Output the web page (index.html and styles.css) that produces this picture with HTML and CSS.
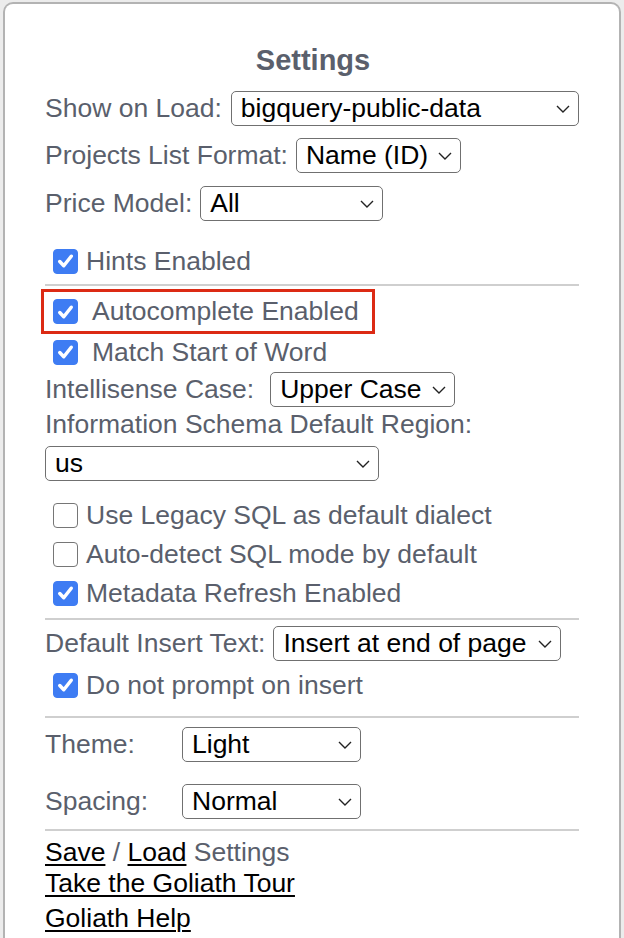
FILE: index.html
```html
<!DOCTYPE html>
<html>
<head>
<meta charset="utf-8">
<link rel="stylesheet" href="styles.css">
</head>
<body>
<div class="popup">
  <h1 class="title">Settings</h1>

  <div class="row r1">
    <span class="label">Show on Load:</span>
    <div class="select w-load"><span>bigquery-public-data</span><svg class="chev" viewBox="0 0 14 8"><path d="M1 1 L7 7 L13 1"/></svg></div>
  </div>
  <div class="row r2">
    <span class="label">Projects List Format:</span>
    <div class="select w-fmt"><span>Name (ID)</span><svg class="chev" viewBox="0 0 14 8"><path d="M1 1 L7 7 L13 1"/></svg></div>
  </div>
  <div class="row r3">
    <span class="label">Price Model:</span>
    <div class="select w-price"><span>All</span><svg class="chev" viewBox="0 0 14 8"><path d="M1 1 L7 7 L13 1"/></svg></div>
  </div>

  <div class="check hints">
    <span class="cb on"><svg viewBox="0 0 24 24"><path d="M6 12.5 L10.2 17 L18 7"/></svg></span>
    <span class="label">Hints Enabled</span>
  </div>
  <div class="rule rule1"></div>

  <div class="highlight">
    <div class="check wide">
      <span class="cb on"><svg viewBox="0 0 24 24"><path d="M6 12.5 L10.2 17 L18 7"/></svg></span>
      <span class="label">Autocomplete Enabled</span>
    </div>
  </div>
  <div class="check wide match">
    <span class="cb on"><svg viewBox="0 0 24 24"><path d="M6 12.5 L10.2 17 L18 7"/></svg></span>
    <span class="label">Match Start of Word</span>
  </div>

  <div class="row r-case">
    <span class="label">Intellisense Case:</span>
    <div class="select w-case"><span>Upper Case</span><svg class="chev" viewBox="0 0 14 8"><path d="M1 1 L7 7 L13 1"/></svg></div>
  </div>
  <div class="text-line info">
    <span class="label">Information Schema Default Region:</span>
  </div>
  <div class="row r-us">
    <div class="select w-us"><span>us</span><svg class="chev" viewBox="0 0 14 8"><path d="M1 1 L7 7 L13 1"/></svg></div>
  </div>

  <div class="check legacy">
    <span class="cb"></span>
    <span class="label">Use Legacy SQL as default dialect</span>
  </div>
  <div class="check next">
    <span class="cb"></span>
    <span class="label">Auto-detect SQL mode by default</span>
  </div>
  <div class="check next">
    <span class="cb on"><svg viewBox="0 0 24 24"><path d="M6 12.5 L10.2 17 L18 7"/></svg></span>
    <span class="label">Metadata Refresh Enabled</span>
  </div>
  <div class="rule rule2"></div>

  <div class="row r-insert">
    <span class="label">Default Insert Text:</span>
    <div class="select w-insert"><span>Insert at end of page</span><svg class="chev" viewBox="0 0 14 8"><path d="M1 1 L7 7 L13 1"/></svg></div>
  </div>
  <div class="check prompt">
    <span class="cb on"><svg viewBox="0 0 24 24"><path d="M6 12.5 L10.2 17 L18 7"/></svg></span>
    <span class="label">Do not prompt on insert</span>
  </div>
  <div class="rule rule3"></div>

  <div class="pair theme">
    <span class="label">Theme:</span>
    <div class="select w-theme"><span>Light</span><svg class="chev" viewBox="0 0 14 8"><path d="M1 1 L7 7 L13 1"/></svg></div>
  </div>
  <div class="pair spacing">
    <span class="label">Spacing:</span>
    <div class="select w-theme"><span>Normal</span><svg class="chev" viewBox="0 0 14 8"><path d="M1 1 L7 7 L13 1"/></svg></div>
  </div>
  <div class="rule rule4"></div>

  <div class="text-line links first"><a href="#">Save</a><span class="label"> / </span><a href="#">Load</a><span class="label"> Settings</span></div>
  <div class="text-line links tour"><a href="#">Take the Goliath Tour</a></div>
  <div class="text-line links help"><a href="#">Goliath Help</a></div>
</div>
</body>
</html>
```

FILE: styles.css
```css
html, body {
  margin: 0;
  padding: 0;
}
body {
  background: #ececec;
  font-family: "Liberation Sans", Arial, sans-serif;
  font-size: 26.5px;
  height: 938px;
  overflow: hidden;
}
.popup {
  margin: 2px 3px 0 3px;
  height: 960px;
  box-sizing: border-box;
  background: #fff;
  border: 2px solid #b3b3b3;
  border-bottom: none;
  border-radius: 10px 10px 0 0;
  padding: 0 38px 0 40px;
  display: flex;
  flex-direction: column;
  align-items: flex-start;
}
.label {
  color: #5a5f6c;
  white-space: nowrap;
}
.title {
  align-self: stretch;
  text-align: center;
  margin: 39px 0 0 0;
  font-size: 29px;
  line-height: 34px;
  font-weight: bold;
  color: #5a5f6c;
}
.row {
  display: flex;
  align-items: center;
  height: 35px;
}
.select {
  box-sizing: border-box;
  height: 35px;
  border: 1.5px solid #707070;
  border-radius: 5px;
  display: flex;
  align-items: center;
  justify-content: space-between;
  padding: 0 8px 0 9px;
  color: #000;
  white-space: nowrap;
  background: #fff;
}
.chev {
  width: 14px;
  height: 8px;
  flex: none;
  margin-left: 8px;
}
.chev path {
  fill: none;
  stroke: #222;
  stroke-width: 1.4;
}
.r1 { margin-top: 14px; }
.r1 .select { margin-left: 9px; }
.w-load { width: 348px; }
.r2 { margin-top: 12px; }
.r2 .select { margin-left: 8px; }
.w-fmt { width: 165px; }
.r3 { margin-top: 13px; }
.r3 .select { margin-left: 8px; }
.w-price { width: 183px; }

.check {
  display: flex;
  align-items: center;
  height: 28px;
  padding-left: 8px;
}
.cb {
  box-sizing: border-box;
  width: 25px;
  height: 25px;
  border-radius: 4px;
  border: 1.5px solid #767676;
  background: #fff;
  margin-right: 8px;
  flex: none;
  display: flex;
  align-items: center;
  justify-content: center;
}
.cb.on {
  background: #3e7cf3;
  border-color: #3e7cf3;
}
.cb svg {
  width: 24px;
  height: 24px;
}
.cb svg path {
  fill: none;
  stroke: #fff;
  stroke-width: 3.6;
  stroke-linecap: round;
  stroke-linejoin: round;
}
.check.wide .cb { margin-right: 14px; }
.hints { margin-top: 26px; }
.rule {
  align-self: stretch;
  height: 2px;
  background: #cfcfcf;
  margin-right: 2px;
}
.rule1 { margin-top: 9px; }
.highlight {
  margin: 3px 0 0 -4px;
  box-sizing: border-box;
  width: 334px;
  height: 45px;
  border: 3px solid #dc2a14;
  display: flex;
  align-items: center;
  padding-left: 1px;
}
.match { margin-top: 4px; }
.r-case { margin-top: 6px; }
.r-case .select { margin-left: 16px; }
.w-case { width: 185px; }
.text-line {
  height: 28px;
  display: flex;
  align-items: center;
  white-space: nowrap;
}
.info { margin-top: 3px; }
.r-us { margin-top: 8px; }
.w-us { width: 334px; }
.legacy { margin-top: 20px; }
.next { margin-top: 11px; }
.rule2 { margin-top: 11px; }
.r-insert { margin-top: 6px; }
.r-insert .select { margin-left: 8px; }
.w-insert { width: 288px; }
.prompt { margin-top: 10px; }
.rule3 { margin-top: 17px; }
.pair {
  display: grid;
  grid-template-columns: 137px auto;
  align-items: center;
  height: 35px;
}
.theme { margin-top: 9px; }
.spacing { margin-top: 22px; }
.w-theme { width: 179px; }
.rule4 { margin-top: 10px; }
.links a {
  color: #000;
  text-decoration: underline;
  text-decoration-thickness: 1.5px;
  text-underline-offset: 3px;
}
.links .label { white-space: pre; }
.first { margin-top: 6px; height: 30px; }
.tour { margin-top: 1px; height: 30px; }
.help { margin-top: 5px; height: 30px; }
```
